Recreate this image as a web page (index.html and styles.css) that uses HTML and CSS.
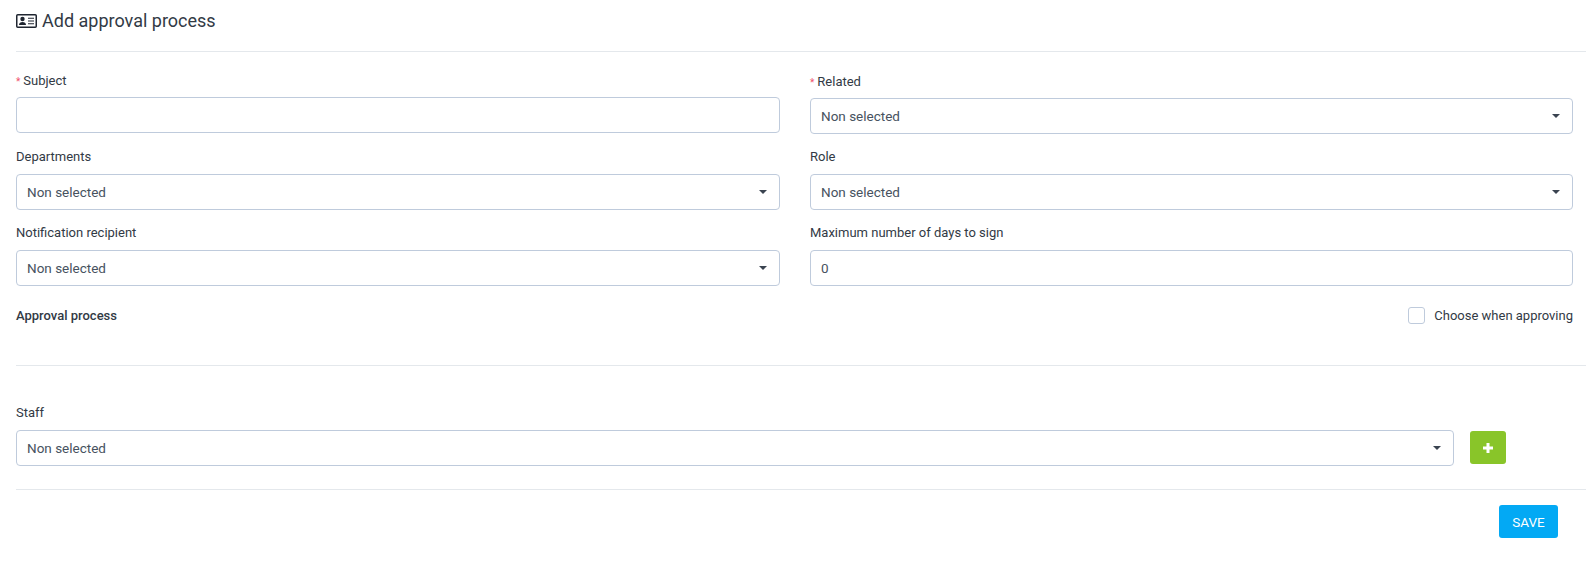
FILE: index.html
```html
<!DOCTYPE html>
<html lang="en">
<head>
<meta charset="utf-8">
<title>Add approval process</title>
<link rel="stylesheet" href="styles.css">
</head>
<body>
<main class="page">
  <h4 class="title">
    <svg class="title-icon" viewBox="0 0 21 14" width="21" height="14" aria-hidden="true">
      <rect x="0.75" y="0.75" width="19.5" height="12.5" rx="1" fill="none" stroke="#1f2530" stroke-width="1.5"/>
      <circle cx="6.5" cy="5" r="2.2" fill="#1f2530"/>
      <path d="M3 11c0-2.2 1.5-3.1 3.5-3.1s3.5.9 3.5 3.1z" fill="#1f2530"/>
      <path d="M12 4.2h6M12 7h6M12 9.8h6" stroke="#1f2530" stroke-width="1.1"/>
    </svg>
    <span>Add approval process</span>
  </h4>
  <hr class="rule">
  <div class="form-grid">
    <div class="field field-first">
      <label class="label"><span class="req">*</span>Subject</label>
      <div class="control"></div>
    </div>
    <div class="field field-first field-shift">
      <label class="label"><span class="req">*</span>Related</label>
      <div class="control select"><span>Non selected</span><i class="caret"></i></div>
    </div>
    <div class="field">
      <label class="label">Departments</label>
      <div class="control select"><span>Non selected</span><i class="caret"></i></div>
    </div>
    <div class="field">
      <label class="label">Role</label>
      <div class="control select"><span>Non selected</span><i class="caret"></i></div>
    </div>
    <div class="field">
      <label class="label">Notification recipient</label>
      <div class="control select"><span>Non selected</span><i class="caret"></i></div>
    </div>
    <div class="field">
      <label class="label">Maximum number of days to sign</label>
      <div class="control"><span>0</span></div>
    </div>
  </div>
  <div class="approval-row">
    <strong class="approval-title">Approval process</strong>
    <label class="check"><i class="box"></i><span>Choose when approving</span></label>
  </div>
  <hr class="rule rule-approval">
  <label class="label staff-label">Staff</label>
  <div class="staff-row">
    <div class="control select staff-select"><span>Non selected</span><i class="caret"></i></div>
    <button class="add-btn" type="button" aria-label="Add">
      <svg viewBox="0 0 12 12" width="12" height="12" aria-hidden="true"><path d="M6 1v10M1 6h10" stroke="#fff" stroke-width="3"/></svg>
    </button>
  </div>
  <hr class="rule rule-staff">
  <div class="actions"><button class="save-btn" type="button">SAVE</button></div>
</main>
</body>
</html>
```
FILE: styles.css
```css
* { box-sizing: border-box; }
html, body { margin: 0; padding: 0; background: #fff; }
body { font-family: Roboto, "Liberation Sans", sans-serif; font-size: 13px; color: #3a4350; height: 570px; overflow: hidden; }
.page { padding-left: 16px; }
.title { margin: 0; height: 51px; padding-top: 10px; display: flex; align-items: flex-start; gap: 5px; font-size: 18px; font-weight: 400; line-height: 22px; color: #323a45; }
.title-icon { margin-top: 4px; flex: none; }
.rule { border: 0; border-top: 1px solid #e4e8ec; margin: 0; }
.form-grid { display: grid; grid-template-columns: 764px 763px; column-gap: 30px; }
.field { height: 76px; display: flex; flex-direction: column; }
.field-first { height: 82px; }
.label { display: block; height: 16px; line-height: 16px; margin-top: 15px; margin-bottom: 9px; color: #323a45; }
.field-first .label { margin-top: 21px; margin-bottom: 8px; }
.field-shift .label { margin-top: 22px; }
.req { color: #f0526a; font-size: 10px; margin-right: 3px; }
.control { height: 36px; border: 1px solid #bfcbdc; border-radius: 4px; background: #fff; display: flex; align-items: center; justify-content: space-between; padding: 0 10px; font-size: 13.5px; color: #475260; flex: none; }
.caret { width: 0; height: 0; border-left: 4px solid transparent; border-right: 4px solid transparent; border-top: 4px solid #3a4350; margin-right: 2px; }
.approval-row { display: flex; justify-content: space-between; align-items: center; height: 18px; margin-top: 20px; width: 1557px; }
.approval-title { font-weight: 500; color: #323a45; }
.check { display: flex; align-items: center; gap: 9px; color: #323a45; }
.box { width: 17px; height: 17px; border: 1px solid #bfcbdc; border-radius: 3px; background: #fff; }
.rule-approval { margin-top: 41px; }
.staff-label { margin-top: 39px; margin-bottom: 9px; }
.staff-row { display: flex; align-items: flex-start; gap: 16px; }
.staff-select { width: 1438px; }
.add-btn { width: 36px; height: 33px; margin-top: 1px; border: 0; padding: 0; border-radius: 3px; background: #89c529; display: flex; align-items: center; justify-content: center; }
.rule-staff { margin-top: 23px; }
.actions { display: flex; justify-content: flex-end; padding: 15px 28px 0 0; }
.save-btn { width: 59px; height: 33px; border: 0; padding: 0; border-radius: 3px; background: #03a9f4; color: #fff; font: 400 13.5px Roboto, "Liberation Sans", sans-serif; }
```
